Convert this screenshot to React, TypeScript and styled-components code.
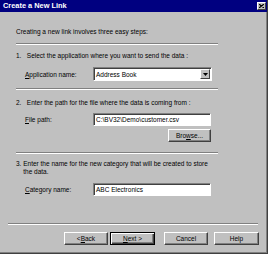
import React from 'react';
import styled, { createGlobalStyle } from 'styled-components';

const GlobalStyle = createGlobalStyle`
  html, body {
    margin: 0;
    padding: 0;
    background: #c0c0c0;
  }
  body {
    font-family: "Liberation Sans", Arial, sans-serif;
    font-size: 6.5px;
    color: #000;
  }
`;

const Window = styled.div`
  width: 268px;
  height: 254px;
  box-sizing: border-box;
  background: #c0c0c0;
  border-right: 1px solid #404040;
  border-bottom: 1px solid #404040;
  box-shadow: inset -1px -1px #808080;
  display: flex;
  flex-direction: column;
  overflow: hidden;
`;

const TitleBar = styled.div`
  height: 12px;
  background: #000080;
  display: flex;
  align-items: center;
  justify-content: space-between;
  padding: 0 1px 0 3px;
`;

const TitleText = styled.span`
  color: #fff;
  font-weight: bold;
  font-size: 7.4px;
  line-height: 12px;
`;

const CloseButton = styled.div`
  width: 9px;
  height: 8px;
  box-sizing: border-box;
  background: #c0c0c0;
  border: 1px solid;
  border-color: #fff #404040 #404040 #fff;
  display: flex;
  align-items: center;
  justify-content: center;
`;

const Content = styled.div`
  padding-left: 16px;
  display: flex;
  flex-direction: column;
`;

const Text = styled.div<{ $top: number; $lh?: number }>`
  margin-top: ${(p) => p.$top}px;
  line-height: ${(p) => p.$lh ?? 10}px;
  white-space: nowrap;
`;

const Separator = styled.div<{ $top: number; $width: number }>`
  margin-top: ${(p) => p.$top}px;
  width: ${(p) => p.$width}px;
  height: 0;
  border-top: 1px solid #808080;
  border-bottom: 1px solid #fff;
`;

const FieldRow = styled.div<{ $top: number; $height: number }>`
  margin-top: ${(p) => p.$top}px;
  height: ${(p) => p.$height}px;
  display: flex;
  align-items: center;
`;

const Label = styled.span`
  width: 68px;
  padding-left: 9px;
  white-space: nowrap;
`;

const Field = styled.div<{ $width: number }>`
  width: ${(p) => p.$width}px;
  height: 100%;
  box-sizing: border-box;
  background: #fff;
  border: 1px solid;
  border-color: #808080 #fff #fff #808080;
  box-shadow: inset 1px 1px #404040;
  display: flex;
  align-items: center;
  padding-left: 2px;
  white-space: nowrap;
`;

const FieldValue = styled.span`
  flex: 1;
`;

const DropButton = styled.div`
  width: 10px;
  height: 10px;
  margin-right: 1px;
  box-sizing: border-box;
  background: #c0c0c0;
  border: 1px solid;
  border-color: #fff #404040 #404040 #fff;
  display: flex;
  align-items: center;
  justify-content: center;
`;

const Button = styled.div<{ $width: number; $left?: number; $default?: boolean }>`
  width: ${(p) => p.$width}px;
  height: 13px;
  margin-left: ${(p) => p.$left ?? 0}px;
  box-sizing: border-box;
  background: #c0c0c0;
  border: 1px solid;
  border-color: ${(p) => (p.$default ? '#000' : '#fff #404040 #404040 #fff')};
  box-shadow: ${(p) =>
    p.$default
      ? 'inset 1px 1px #fff, inset -1px -1px #404040, inset -2px -2px #808080'
      : 'inset -1px -1px #808080'};
  display: flex;
  align-items: center;
  justify-content: center;
  white-space: nowrap;
`;

const Footer = styled.div`
  margin-top: 27px;
  padding-left: 8px;
  display: flex;
  flex-direction: column;
`;

const ButtonRow = styled.div`
  margin-top: 7px;
  padding-left: 56px;
  display: flex;
`;

const BrowseRow = styled.div`
  margin-top: 3px;
  padding-left: 152px;
  display: flex;
`;

const U = styled.span`
  text-decoration: underline;
`;

export default function App() {
  return (
    <>
      <GlobalStyle />
      <Window>
        <TitleBar>
          <TitleText>Create a New Link</TitleText>
          <CloseButton>
            <svg width="5" height="4" viewBox="0 0 5 4">
              <path d="M0 0 L5 4 M5 0 L0 4" stroke="#000" strokeWidth="1.2" />
            </svg>
          </CloseButton>
        </TitleBar>
        <Content>
          <Text $top={15}>Creating a new link involves three easy steps:</Text>
          <Separator $top={6} $width={202} />
          <Text $top={6}>1.&nbsp;&nbsp; Select the application where you want to send the data :</Text>
          <FieldRow $top={6} $height={14}>
            <Label>
              <U>A</U>pplication name:
            </Label>
            <Field $width={119}>
              <FieldValue>Address Book</FieldValue>
              <DropButton>
                <svg width="5" height="3" viewBox="0 0 5 3">
                  <path d="M0 0 H5 L2.5 3 Z" fill="#000" />
                </svg>
              </DropButton>
            </Field>
          </FieldRow>
          <Separator $top={7} $width={202} />
          <Text $top={8}>2.&nbsp;&nbsp; Enter the path for the file where the data is coming from :</Text>
          <FieldRow $top={5} $height={13}>
            <Label>
              <U>F</U>ile path:
            </Label>
            <Field $width={118}>C:\BV32\Demo\customer.csv</Field>
          </FieldRow>
          <BrowseRow>
            <Button $width={43}>
              Bro<U>w</U>se...
            </Button>
          </BrowseRow>
          <Separator $top={10} $width={202} />
          <Text $top={6} $lh={8}>
            3. Enter the name for the new category that will be created to store
            <br />
            &nbsp;&nbsp;&nbsp; the data.
          </Text>
          <FieldRow $top={7} $height={13}>
            <Label>
              <U>C</U>ategory name:
            </Label>
            <Field $width={118}>ABC Electronics</Field>
          </FieldRow>
        </Content>
        <Footer>
          <Separator $top={0} $width={250} />
          <ButtonRow>
            <Button $width={44}>
              &lt; <U>B</U>ack
            </Button>
            <Button $width={45} $left={2} $default>
              <U>N</U>ext &gt;
            </Button>
            <Button $width={44} $left={9}>
              Cancel
            </Button>
            <Button $width={45} $left={6}>
              Help
            </Button>
          </ButtonRow>
        </Footer>
      </Window>
    </>
  );
}
